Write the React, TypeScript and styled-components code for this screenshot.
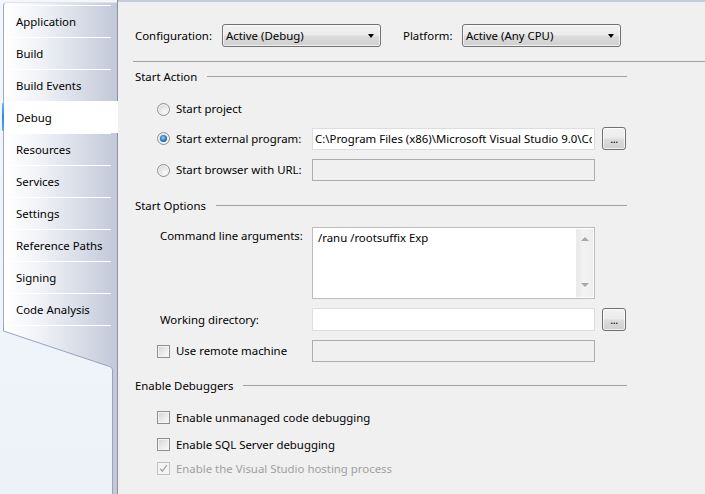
import React from "react";
import styled, { createGlobalStyle, css } from "styled-components";

const GlobalStyle = createGlobalStyle`
  html, body { margin: 0; padding: 0; }
  body {
    background: #f0f0f0;
    font-family: "Noto Sans", "Segoe UI", sans-serif;
    font-size: 11.4px;
    color: #000;
    overflow: hidden;
  }
  * { box-sizing: border-box; }
`;

const Window = styled.div`
  display: flex;
  width: 705px;
  height: 494px;
  overflow: hidden;
`;

/* ---------- Sidebar ---------- */

const Sidebar = styled.nav`
  width: 118px;
  flex: none;
  display: flex;
  flex-direction: column;
  background: linear-gradient(180deg, #f3f6fb 0%, #edf2f9 100%);
  border-right: 1px solid #8d939e;
  padding-top: 2px;
`;

const TabList = styled.div`
  margin-left: 3px;
  padding-top: 2px;
  border-left: 1px solid #a3abbb;
  border-top: 1px solid #dfe3ea;
  border-top-left-radius: 4px;
  background: linear-gradient(90deg, #ffffff 0%, #f1f3f7 30%, #d6dbe6 70%, #c2c8d8 100%);
  display: flex;
  flex-direction: column;
`;

const Tab = styled.div<{ $active?: boolean }>`
  position: relative;
  height: 32px;
  padding: 1px 0 0 12px;
  display: flex;
  align-items: center;
  white-space: nowrap;
  &::before {
    content: "";
    position: absolute;
    top: 0;
    left: 4px;
    right: 6px;
    height: 1px;
    background: #ffffff;
  }
  ${(p) =>
    p.$active &&
    css`
      background: #ffffff;
      margin-right: -1px;
      &::after {
        content: "";
        position: absolute;
        left: -2px;
        top: 2px;
        bottom: 2px;
        width: 2px;
        border-radius: 1px;
        background: linear-gradient(180deg, #6bb4fa, #2f87e6 50%, #5aa7f5);
      }
    `}
`;

const TabTail = styled.svg`
  display: block;
  flex: none;
`;

/* ---------- Content ---------- */

const Content = styled.main`
  flex: 1;
  background: #f0f0f0;
  border-top: 2px solid #c4cbd9;
  padding-top: 22px;
`;

const ConfigRow = styled.div`
  display: flex;
  align-items: center;
  padding-left: 17px;
  height: 23px;
`;

const FieldLabel = styled.span<{ $width: number }>`
  width: ${(p) => p.$width}px;
  flex: none;
  white-space: nowrap;
`;

const Select = styled.div<{ $gapRight?: number }>`
  width: 159px;
  height: 23px;
  flex: none;
  margin-right: ${(p) => p.$gapRight ?? 0}px;
  border: 1px solid #707070;
  border-radius: 3px;
  background: linear-gradient(180deg, #f2f2f2 0%, #ebebeb 48%, #dddddd 52%, #cfcfcf 100%);
  box-shadow: inset 0 0 0 1px rgba(255, 255, 255, 0.7);
  display: flex;
  align-items: center;
  justify-content: space-between;
  padding: 0 6px 0 3px;
  white-space: nowrap;
`;

const SelectArrow = styled.span`
  width: 0;
  height: 0;
  border-top: 4px solid #000;
  border-left: 3.5px solid transparent;
  border-right: 3.5px solid transparent;
`;

const Rule = styled.div`
  height: 1px;
  margin: 14px 0 0 15px;
  background: #a0a0a0;
`;

const Body = styled.div`
  padding: 0 78px 0 17px;
`;

const GroupHeader = styled.div<{ $mt: number }>`
  display: flex;
  align-items: center;
  gap: 10px;
  height: 16px;
  margin-top: ${(p) => p.$mt}px;
  white-space: nowrap;
  &::after {
    content: "";
    flex: 1;
    height: 1px;
    background: #a0a0a0;
  }
`;

const FormRow = styled.div<{ $mt: number; $align?: string }>`
  display: grid;
  grid-template-columns: 170px 283px 24px;
  column-gap: 7px;
  min-height: 22px;
  align-items: ${(p) => p.$align ?? "center"};
  margin-top: ${(p) => p.$mt}px;
`;

const RowLabel = styled.div<{ $indent: number; $top?: number }>`
  display: flex;
  align-items: center;
  gap: 6px;
  padding-left: ${(p) => p.$indent}px;
  padding-top: ${(p) => p.$top ?? 0}px;
  white-space: nowrap;
  line-height: 16px;
`;

const Radio = styled.span<{ $checked?: boolean }>`
  width: 13px;
  height: 13px;
  flex: none;
  border-radius: 50%;
  border: 1px solid #8e8f8f;
  background: radial-gradient(circle at 65% 70%, #fbfbfb 0%, #e6e6e6 45%, #cfcfcf 100%);
  box-shadow: inset 0 0 0 1px #f4f4f4;
  display: inline-flex;
  align-items: center;
  justify-content: center;
  ${(p) =>
    p.$checked &&
    css`
      &::after {
        content: "";
        width: 7px;
        height: 7px;
        border-radius: 50%;
        background: radial-gradient(circle at 45% 40%, #9fdcff 0%, #2a83d4 45%, #0c3f7a 100%);
      }
    `}
`;

const TextBox = styled.div<{ $disabled?: boolean; $h: number }>`
  height: ${(p) => p.$h}px;
  min-width: 0;
  border: 1px solid ${(p) => (p.$disabled ? "#adadad" : "#dcdde2")};
  background: ${(p) => (p.$disabled ? "#f0f0f0" : "#ffffff")};
  padding: 0 2px;
  display: flex;
  align-items: center;
  overflow: hidden;
`;

const TextValue = styled.span`
  display: block;
  flex: 1;
  min-width: 0;
  overflow: hidden;
  white-space: nowrap;
  text-overflow: clip;
`;

const MultiLine = styled.div`
  height: 72px;
  border: 1px solid #bcbcbc;
  background: #ffffff;
  display: flex;
  overflow: hidden;
`;

const MultiText = styled.div`
  flex: 1;
  padding: 2px 5px;
  line-height: 16px;
  white-space: nowrap;
`;

const ScrollTrack = styled.div`
  width: 17px;
  margin: 1px 1px 1px 0;
  background: linear-gradient(90deg, #e9e9e9, #f3f3f3 40%, #eeeeee);
  border-left: 1px solid #ececec;
  display: flex;
  flex-direction: column;
  align-items: center;
  justify-content: space-between;
  padding: 8px 0 10px;
`;

const ScrollArrow = styled.span<{ $down?: boolean }>`
  width: 0;
  height: 0;
  border-left: 4px solid transparent;
  border-right: 4px solid transparent;
  ${(p) =>
    p.$down
      ? css`border-top: 4px solid #a8a8a8;`
      : css`border-bottom: 4px solid #a8a8a8;`}
`;

const BrowseButton = styled.div`
  width: 24px;
  height: 23px;
  border: 1px solid #707070;
  border-radius: 3px;
  background: linear-gradient(180deg, #f2f2f2 0%, #ebebeb 48%, #dddddd 52%, #cfcfcf 100%);
  box-shadow: inset 0 0 0 1px rgba(255, 255, 255, 0.7);
  display: flex;
  align-items: center;
  justify-content: center;
  padding-bottom: 1px;
  font-size: 11px;
  letter-spacing: -0.5px;
`;

const CheckRow = styled.div<{ $mt: number; $disabled?: boolean }>`
  display: flex;
  align-items: center;
  gap: 6px;
  height: 16px;
  padding-left: 22px;
  margin-top: ${(p) => p.$mt}px;
  white-space: nowrap;
  color: ${(p) => (p.$disabled ? "#a0a0a0" : "#000")};
`;

const CheckBox = styled.span<{ $disabled?: boolean }>`
  width: 13px;
  height: 13px;
  flex: none;
  border: 1px solid ${(p) => (p.$disabled ? "#c2c2c2" : "#8e8f8f")};
  background: ${(p) =>
    p.$disabled
      ? "#f4f4f4"
      : "linear-gradient(135deg, #d2d2d2 0%, #e9e9e9 50%, #fafafa 100%)"};
  box-shadow: inset 0 0 0 1px #f4f4f4;
  display: inline-flex;
  align-items: center;
  justify-content: center;
`;

const tabs = [
  "Application",
  "Build",
  "Build Events",
  "Debug",
  "Resources",
  "Services",
  "Settings",
  "Reference Paths",
  "Signing",
  "Code Analysis",
];

export default function App() {
  return (
    <>
      <GlobalStyle />
      <Window>
        <Sidebar>
          <TabList>
            {tabs.map((t) => (
              <Tab key={t} $active={t === "Debug"}>
                {t}
              </Tab>
            ))}
          </TabList>
          <TabTail width="117" height="169" viewBox="0 0 117 169">
            <defs>
              <linearGradient id="tabgrad" gradientUnits="userSpaceOnUse" x1="4" y1="0" x2="117" y2="0">
                <stop offset="0" stopColor="#ffffff" />
                <stop offset="0.3" stopColor="#f1f3f7" />
                <stop offset="0.7" stopColor="#d6dbe6" />
                <stop offset="1" stopColor="#c2c8d8" />
              </linearGradient>
            </defs>
            <path d="M3.5 0 H117 V169 H112.5 V45 Q112.5 42 109.5 41.5 L3.5 6 Z" fill="url(#tabgrad)" />
            <line x1="8" y1="0.5" x2="111" y2="0.5" stroke="#ffffff" strokeWidth="1" />
            <path d="M3.5 0 V6 L109.5 41.5 Q112.5 42 112.5 45 V169" fill="none" stroke="#98a3bd" strokeWidth="1" />
          </TabTail>
        </Sidebar>

        <Content>
          <ConfigRow>
            <FieldLabel $width={87}>Configuration:</FieldLabel>
            <Select $gapRight={22}>
              <span>Active (Debug)</span>
              <SelectArrow />
            </Select>
            <FieldLabel $width={59}>Platform:</FieldLabel>
            <Select>
              <span>Active (Any CPU)</span>
              <SelectArrow />
            </Select>
          </ConfigRow>
          <Rule />

          <Body>
            <GroupHeader $mt={6}>Start Action</GroupHeader>

            <FormRow $mt={14}>
              <RowLabel $indent={22}>
                <Radio />
                Start project
              </RowLabel>
            </FormRow>
            <FormRow $mt={7}>
              <RowLabel $indent={22}>
                <Radio $checked />
                Start external program:
              </RowLabel>
              <TextBox $h={22}>
                <TextValue>C:\Program Files (x86)\Microsoft Visual Studio 9.0\Common7\IDE\devenv.exe</TextValue>
              </TextBox>
              <BrowseButton>...</BrowseButton>
            </FormRow>
            <FormRow $mt={9}>
              <RowLabel $indent={22}>
                <Radio />
                Start browser with URL:
              </RowLabel>
              <TextBox $h={22} $disabled />
            </FormRow>

            <GroupHeader $mt={16}>Start Options</GroupHeader>

            <FormRow $mt={14} $align="start">
              <RowLabel $indent={25} $top={1}>
                Command line arguments:
              </RowLabel>
              <MultiLine>
                <MultiText>/ranu /rootsuffix Exp</MultiText>
                <ScrollTrack>
                  <ScrollArrow />
                  <ScrollArrow $down />
                </ScrollTrack>
              </MultiLine>
            </FormRow>
            <FormRow $mt={9}>
              <RowLabel $indent={25}>Working directory:</RowLabel>
              <TextBox $h={23} />
              <BrowseButton>...</BrowseButton>
            </FormRow>
            <FormRow $mt={9}>
              <RowLabel $indent={22}>
                <CheckBox />
                Use remote machine
              </RowLabel>
              <TextBox $h={22} $disabled />
            </FormRow>

            <GroupHeader $mt={15}>Enable Debuggers</GroupHeader>

            <CheckRow $mt={16}>
              <CheckBox />
              Enable unmanaged code debugging
            </CheckRow>
            <CheckRow $mt={11}>
              <CheckBox />
              Enable SQL Server debugging
            </CheckRow>
            <CheckRow $mt={8} $disabled>
              <CheckBox $disabled>
                <svg width="9" height="9" viewBox="0 0 9 9">
                  <path d="M1.2 4.8 L3.4 7.2 L7.8 1.2" fill="none" stroke="#a6a6a6" strokeWidth="1.3" />
                </svg>
              </CheckBox>
              Enable the Visual Studio hosting process
            </CheckRow>
          </Body>
        </Content>
      </Window>
    </>
  );
}
